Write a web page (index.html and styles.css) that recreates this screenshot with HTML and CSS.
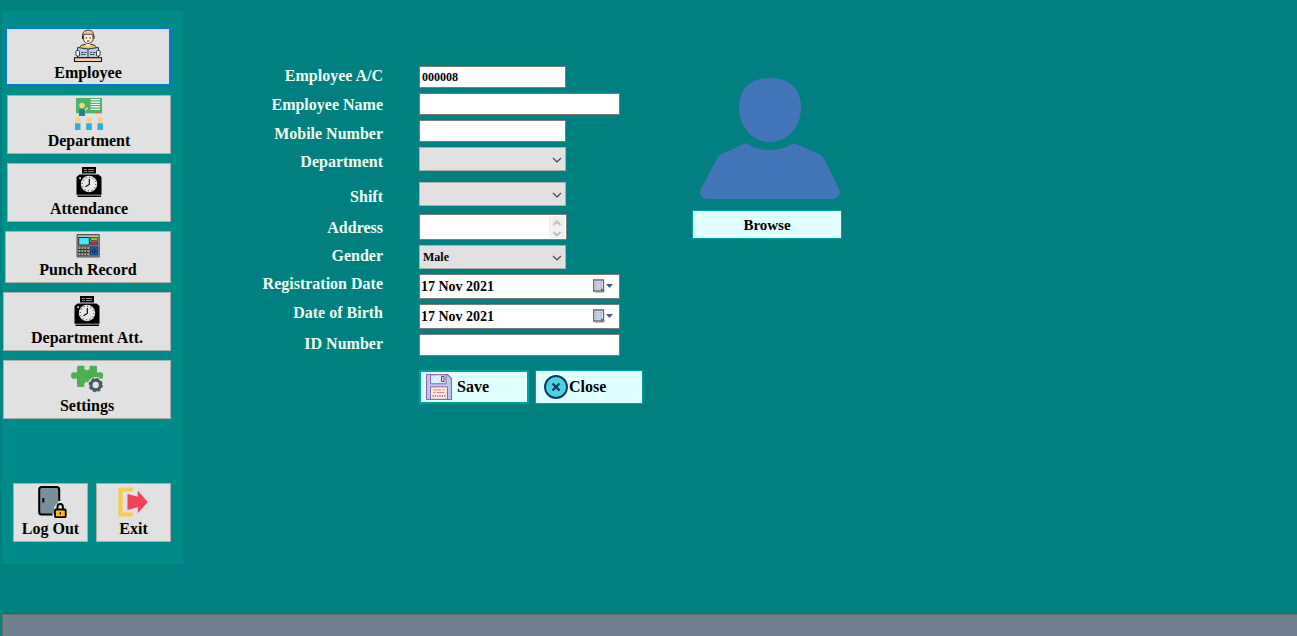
FILE: index.html
```html
<!DOCTYPE html>
<html lang="en">
<head>
    <meta charset="utf-8">
    <title>Employee</title>
    <link rel="stylesheet" href="styles.css">
</head>
<body>

    <svg class="defs" width="0" height="0">
        <symbol id="clock" viewBox="0 0 34 34">
            <path d="M10 2h14v6.500h-14z"/>
            <path d="M7.500 9.500h19l3 2.500v17.700h-25v-17.700z"/>
            <path d="M5.500 30.500h23.500v1.500h-23.500z"/>
            <path d="M12 4.500h3M16 4.500h6M12 6.600h3M16 6.600h6" stroke="#999" stroke-width=".9"/>
            <path d="M7.200 12.300h1.800v1.800h-1.800z" fill="#ddd"/>
            <circle cx="17" cy="19" r="8.200" fill="#e8e8e8"/>
            <circle cx="17" cy="19" r="6.800" fill="none" stroke="#000" stroke-width="1" stroke-dasharray=".9 2.660"/>
            <path d="M17.300 14v5.500l-3.800 2.200" fill="none" stroke="#000" stroke-width="1.100"/>
        </symbol>
        <symbol id="arrow" viewBox="0 0 10 6">
            <path d="M1 1l4 4l4-4" fill="none" stroke="#444" stroke-width="1.200"/>
        </symbol>
        <symbol id="calendar" viewBox="0 0 20 14">
            <path d="M2 13.500h8.500l1.500-2" fill="none" stroke="#c4c4c4" stroke-width="1"/>
            <path d="M.7 1h9.800v11h-9.800z" fill="#eef1f6" stroke="#6d6166" stroke-width="1.300"/>
            <path d="M2 2.500h7v8h-7z" fill="#a9b8cf"/>
            <path d="M2 5.200h7M2 7.800h7M4.300 2.500v8M6.700 2.500v8" stroke="#e6ebf3" stroke-width=".6"/>
            <path d="M8 12.500v-2.500h3z" fill="#6d6166"/>
            <path d="M13 5h7l-3.500 4z" fill="#40608f"/>
        </symbol>
    </svg>

    <div class="content">
        <nav class="sidebar">
            <button class="nav-btn w166 selected">
                <svg class="icon" viewBox="0 0 34 34">
                    <path d="M8 21c0-4 3-5.500 6-5.500h6c3 0 6 1.500 6 5.500z" fill="#e0cf5a" stroke="#222" stroke-width="1"/>
                    <path d="M14.500 13h5v3l-2.500 2l-2.500-2z" fill="#fbe3cf"/>
                    <path d="M12.500 6c0-6 9-6 9.500 0v4c0 6-9.500 6-9.500 0z" fill="#fdebdc" stroke="#333" stroke-width=".9"/>
                    <path d="M11.500 6.500c-.5-6 9.500-7.500 11-2l.3 3l-1.800-2.300h-7z" fill="#f2c49b" stroke="#333" stroke-width=".9"/>
                    <path d="M11.500 7v3M23 7v3M14.500 9h1.500M18.500 9h1.500M16 12h2.500" stroke="#222" stroke-width="1"/>
                    <path d="M6.500 18.500l10.500 1.500l10.500-1.500v10h-21z" fill="#b9cdf5" stroke="#263350" stroke-width="1"/>
                    <path d="M17 20v9" stroke="#333" stroke-width="1"/>
                    <path d="M10 23.500h2.500M13.500 23.500h2M10 25.500h4.500M19 23.500h2M22 23.500h2.500M19 25.500h4.500" stroke="#222" stroke-width=".8"/>
                    <rect x="5" y="21.500" width="3.500" height="5.500" rx="1" fill="#fff" stroke="#222" stroke-width=".9"/>
                    <rect x="25.500" y="21.500" width="3.500" height="5.500" rx="1" fill="#fff" stroke="#222" stroke-width=".9"/>
                    <path d="M3.500 28.800h27v3.700h-27z" fill="#f5cfa8" stroke="#111" stroke-width="1.100"/>
                </svg>
                Employee
            </button>
            <button class="nav-btn w164">
                <svg class="icon" viewBox="0 0 34 34">
                    <path d="M4 1h26v15.300h-26z" fill="#51b26b"/>
                    <path d="M18.700 2.700h9.300M18.700 5.100h9.300M18.700 7.500h9.300M18.700 9.900h9.300M18.700 12.300h9.300" stroke="#fff" stroke-width="1.200"/>
                    <path d="M12.500 14l3-3.500" stroke="#ffd07d" stroke-width="1.600"/>
                    <path d="M24 14.300h4v2h-4z" fill="#e56b35"/>
                    <path d="M7 13.500q0-1.500 1.500-1.500h3q1.500 0 1.500 1.500v5.500h-6z" fill="#22838e"/>
                    <g fill="#ffd07d">
                        <circle cx="10" cy="8.500" r="2.800"/>
                        <circle cx="5.700" cy="22.700" r="2.700"/>
                        <circle cx="17" cy="22.700" r="2.700"/>
                        <circle cx="28.300" cy="22.700" r="2.700"/>
                    </g>
                    <path d="M3 26.300h5.500v6.700h-5.500zM14.200 26.300h5.600v6.700h-5.600zM25.500 26.300h5.500v6.700h-5.500z" fill="#30b0cf"/>
                </svg>
                Department
            </button>
            <button class="nav-btn w164">
                <svg class="icon"><use href="#clock"/></svg>
                Attendance
            </button>
            <button class="nav-btn w166 short">
                <svg class="icon" viewBox="0 0 34 27">
                    <path d="M6 1.500h22.300v22.500h-22.300z" fill="#8a8c90" stroke="#55575c" stroke-width="1"/>
                    <path d="M7 2.500h20.300v1.500h-20.300z" fill="#b5b7bb"/>
                    <path d="M7.700 4.500h10.600v7.500h-10.600z" fill="#41e6f7" stroke="#222" stroke-width=".9"/>
                    <path d="M19.700 4.700h6.900v2.700h-6.900z" fill="#9bd01e" stroke="#222" stroke-width=".6"/>
                    <path d="M19.700 9h6.900v2.700h-6.900z" fill="#e8262f" stroke="#222" stroke-width=".6"/>
                    <path d="M7 13.500h11.500v9h-11.500z" fill="#33352f"/>
                    <path d="M7.500 15h11M7.500 18h11M7.500 21h11" stroke="#d2d3b4" stroke-width="1.700" stroke-dasharray="1.900 1"/>
                    <path d="M19.500 13.700h7.300v8.300h-7.300z" fill="#1464c0" stroke="#0b2f66" stroke-width=".8"/>
                    <path d="M21.500 20v-3q1.700-2.500 3.400 0v3M23.200 17.500v3" fill="none" stroke="#0b2347" stroke-width="1"/>
                </svg>
                Punch Record
            </button>
            <button class="nav-btn w168">
                <svg class="icon"><use href="#clock"/></svg>
                Department Att.
            </button>
            <button class="nav-btn w168">
                <svg class="icon" viewBox="0 0 34 34">
                    <path d="M7 5q0-1.300 1.300-1.300h5.200q1.300 0 1 1.300q-.8 3 2.500 3t2.500-3q-.3-1.300 1-1.300h5.200q1.300 0 1.300 1.300v4.500q0 1.500 1.700 1q4.500-1 4.500 3q0 4.500-4.500 3.500q-1.700-.5-1.700 1v5q0 1.300-1.300 1.300h-5.200q-1.300 0-1-1.300q.5-3-2.500-3t-2.700 3.500q.3 1.500-1 1.500h-5q-1.300 0-1.300-1.300v-6.200q0-1.500-1.500-1q-4.500 1.200-4.500-3q0-4 4.500-3q1.500.5 1.500-1z" fill="#4caf50"/>
                    <circle cx="25.700" cy="23" r="8" fill="#e1e1e1"/>
                    <circle cx="25.700" cy="23" r="4.800" fill="none" stroke="#455a64" stroke-width="3.200"/>
                    <circle cx="25.700" cy="23" r="6.500" fill="none" stroke="#455a64" stroke-width="1.300" stroke-dasharray="2.600 2.500"/>
                </svg>
                Settings
            </button>

            <div class="session">
                <button class="nav-btn w75">
                    <svg class="icon" viewBox="0 0 34 34">
                        <rect x="5.200" y="2" width="20" height="27.500" rx="2.500" fill="#78909c" stroke="#000" stroke-width="2"/>
                        <path d="M9.300 13v4.500" stroke="#000" stroke-width="2"/>
                        <path d="M18.500 20l3.500-4h6v16h-9.500z" fill="#e1e1e1"/>
                        <path d="M18 14h6.200v3.500l-4.200 4.500v6.500h-2z" fill="#78909c"/>
                        <path d="M23.500 25v-3q0-3 2.700-3t2.700 3v3" fill="none" stroke="#000" stroke-width="1.900"/>
                        <rect x="21" y="24.500" width="10.700" height="7.700" rx="1" fill="#ffc107" stroke="#000" stroke-width="1.800"/>
                        <path d="M26.300 27.300v2.200" stroke="#000" stroke-width="1.300"/>
                    </svg>
                    Log Out
                </button>
                <button class="nav-btn w75">
                    <svg class="icon" viewBox="0 0 34 34">
                        <path d="M15.800 4.500h-12.300v25h12.300" fill="none" stroke="#f8cc4b" stroke-width="4.200"/>
                        <path d="M10.500 9l10.300 2.700v-6l10 11.300l-10 11.300v-6l-10.300 2.700z" fill="#ef4358"/>
                    </svg>
                    Exit
                </button>
            </div>
        </nav>

        <form class="employee-form">
            <div class="labels">
                <label for="account">Employee A/C</label>
                <label for="name">Employee Name</label>
                <label for="mobile">Mobile Number</label>
                <label for="department">Department</label>
                <label for="shift">Shift</label>
                <label for="address">Address</label>
                <label for="gender">Gender</label>
                <label for="reg_date">Registration Date</label>
                <label for="birth_date">Date of Birth</label>
                <label for="id_number">ID Number</label>
            </div>

            <div class="fields">
                <input type="text" id="account" class="narrow" value="000008">
                <input type="text" id="name">
                <input type="text" id="mobile" class="narrow">
                <div class="picker">
                    <select id="department"><option></option></select>
                    <svg class="chevron"><use href="#arrow"/></svg>
                </div>
                <div class="picker shift">
                    <select id="shift"><option></option></select>
                    <svg class="chevron"><use href="#arrow"/></svg>
                </div>
                <div class="address">
                    <textarea id="address"></textarea>
                    <svg class="scroll" viewBox="0 0 16 22">
                        <path d="M4.500 9l3.500-3.500l3.500 3.500M4.500 16l3.500 3.500l3.500-3.500" fill="none" stroke="#bfbfbf" stroke-width="2"/>
                    </svg>
                </div>
                <div class="picker">
                    <select id="gender">
                        <option>Male</option>
                        <option>Female</option>
                    </select>
                    <svg class="chevron"><use href="#arrow"/></svg>
                </div>
                <div class="date">
                    <input type="text" id="reg_date" value="17 Nov 2021">
                    <svg class="calendar"><use href="#calendar"/></svg>
                </div>
                <div class="date">
                    <input type="text" id="birth_date" value="17 Nov 2021">
                    <svg class="calendar"><use href="#calendar"/></svg>
                </div>
                <input type="text" id="id_number">

                <div class="actions">
                    <button type="button" class="save">
                        <svg width="26" height="26" viewBox="0 0 26 26">
                            <path d="M1 .5h20.500l4 4v21h-24.500q-.5 0-.5-.5v-24z" fill="#bfc8ea" stroke="#8a68a4" stroke-width="1.200"/>
                            <path d="M4.500 .8h15.500v9h-15.500z" fill="#d3ecfb" stroke="#8a68a4" stroke-width="1"/>
                            <path d="M6 9l7-8M10 9l6-7" stroke="#fff" stroke-width="1"/>
                            <path d="M15.500 2.500h2.500v5h-2.500z" fill="#f5dfac" stroke="#624973" stroke-width="1"/>
                            <path d="M4.500 12.800h17v12.500h-17z" fill="#fdecdb" stroke="#8a68a4" stroke-width="1"/>
                            <path d="M7 16h8M16.500 16h2M7 18.500h2M10.500 18.500h8" stroke="#f1818b" stroke-width="1"/>
                            <path d="M6.500 22h13" stroke="#8a68a4" stroke-width="1.500" stroke-dasharray="1.300 1"/>
                        </svg>
                        Save
                    </button>
                    <button type="button" class="close">
                        <svg width="24" height="24" viewBox="0 0 24 24">
                            <circle cx="12" cy="12" r="11" fill="#4dd0e1" stroke="#073763" stroke-width="1.900"/>
                            <path d="M8.500 8.500l7 7M15.500 8.500l-7 7" stroke="#073763" stroke-width="2.200"/>
                        </svg>
                        Close
                    </button>
                </div>
            </div>

            <div class="photo">
                <svg viewBox="0 0 150 125">
                    <path d="M78 2c22 0 31 13 31 30c0 18-13 34-31 34s-31-16-31-34c0-17 9-30 31-30z" fill="#4275b9"/>
                    <path d="M54 67q24 14.500 48 0l26 11.500q2.500 1.200 4 4.500l15 30c2.500 5-1 10-7 10h-124c-6 0-9.500-5-7-10l16-30.500q1.500-3 4-4z" fill="#4275b9"/>
                </svg>
                <button type="button" class="browse">Browse</button>
            </div>
        </form>
    </div>

    <footer class="statusbar"></footer>

</body>
</html>
```

FILE: styles.css
```css
* { box-sizing: border-box; }
body {
    margin: 0;
    min-height: 100vh;
    display: flex;
    flex-direction: column;
    background: #008080;
    font: bold 16px/20px "Book Antiqua", "Liberation Serif", serif;
}
.defs { position: absolute; }
button, input, select, textarea {
    font: inherit;
    color: #000;
    margin: 0;
    border-radius: 0;
}
.content {
    display: flex;
    align-items: flex-start;
    flex: 1;
}

/* sidebar */
.sidebar {
    width: 181px;
    margin: 11px 0 0 2px;
    padding: 16px 12px 22px 0;
    display: flex;
    flex-direction: column;
    align-items: flex-end;
    gap: 9px;
    background: #008b8b;
}
.nav-btn {
    display: flex;
    flex-direction: column;
    align-items: center;
    padding: 1px 0 2px;
    background: #e1e1e1;
    border: 1px solid #adadad;
    white-space: nowrap;
}
.nav-btn.selected {
    padding: 0 0 1px;
    border: 2px solid #0078d7;
}
.icon {
    width: 34px;
    height: 34px;
}
.short .icon { height: 27px; }
.w164 { width: 164px; }
.w166 { width: 166px; }
.w168 { width: 168px; }
.w75 { width: 75px; }
.session {
    display: flex;
    gap: 8px;
    margin-top: 55px;
}

/* employee form */
.employee-form {
    display: flex;
    align-items: flex-start;
    padding: 66px 0 0 76px;
}
.labels {
    width: 124px;
    margin-right: 36px;
    display: grid;
    grid-template-rows: 29px 29px 28px 35px 31px 28px 28px 29px 31px 20px;
    color: #f0fff0;
    text-align: right;
    white-space: nowrap;
}
.fields {
    width: 224px;
    margin-right: 49px;
    display: flex;
    flex-direction: column;
    align-items: flex-start;
    gap: 5px;
}
.fields input {
    width: 201px;
    height: 22px;
    padding: 0 2px;
    border: 1px solid #7a7a7a;
    background: #fff;
    font-size: 12px;
}
.fields input.narrow { width: 147px; }
.picker, .address, .date { position: relative; }
.picker { width: 147px; }
.address { width: 148px; }
.picker select {
    display: block;
    width: 100%;
    height: 24px;
    padding: 0 3px;
    appearance: none;
    background: #e1e1e1;
    border: 1px solid #adadad;
    font-size: 12px;
}
.picker.shift { margin: 6px 0 3px; }
.chevron {
    position: absolute;
    right: 4px;
    top: 10px;
    width: 10px;
    height: 6px;
    pointer-events: none;
}
.address textarea {
    display: block;
    width: 100%;
    height: 26px;
    padding: 2px;
    border: 1px solid #7a7a7a;
    resize: none;
    overflow: hidden;
    font-size: 12px;
}
.scroll {
    position: absolute;
    right: 2px;
    top: 2px;
    width: 16px;
    height: 22px;
    background: #f0f0f0;
}
.fields .date input {
    display: block;
    height: 25px;
    padding: 0 1px;
    font-size: 14px;
}
.calendar {
    position: absolute;
    right: 7px;
    top: 5px;
    width: 20px;
    height: 14px;
}
.actions {
    display: flex;
    gap: 6px;
    margin-top: 9px;
}
.actions button, .browse {
    background: #e0ffff;
    border: 1px solid #00a0a0;
}
.actions button {
    height: 34px;
    display: flex;
    align-items: center;
    padding: 0 5px;
}
.actions .save {
    width: 110px;
    border-width: 2px;
    gap: 5px;
}
.actions .close {
    width: 108px;
    padding: 0 8px;
    gap: 1px;
}
.photo {
    width: 150px;
    margin-top: 10px;
    display: flex;
    flex-direction: column;
    gap: 9px;
}
.browse {
    height: 29px;
    font-size: 15px;
}

.statusbar {
    height: 22px;
    margin-left: 2px;
    background: #708090;
    border: solid #696969;
    border-width: 1px 0 0 1px;
}
```
